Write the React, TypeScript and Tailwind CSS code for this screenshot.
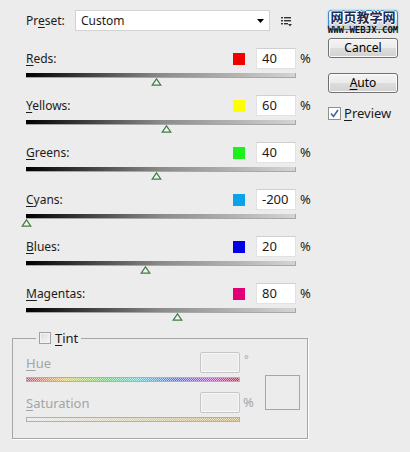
import React from "react";

const channels = [
  { name: "Reds", color: "#f00000", value: "40" },
  { name: "Yellows", color: "#ffff00", value: "60" },
  { name: "Greens", color: "#1ef01e", value: "40" },
  { name: "Cyans", color: "#0aa2e8", value: "-200" },
  { name: "Blues", color: "#0000e6", value: "20" },
  { name: "Magentas", color: "#e2007a", value: "80" },
];

// slider runs -200..300 over 270px
const thumbLeft = (v: string) => ((Number(v) + 200) / 500) * 270;

function Key({ text, at = 0 }: { text: string; at?: number }) {
  return (
    <>
      {text.slice(0, at)}
      <span className="underline underline-offset-2 decoration-1">{text[at]}</span>
      {text.slice(at + 1)}
    </>
  );
}

function Thumb({ left }: { left: number }) {
  return (
    <svg
      width="11"
      height="8"
      className="absolute top-[5px]"
      style={{ left: left - 5 }}
    >
      <path d="M5.5 0.8 L9.8 7.2 H1.2 Z" fill="#eef5ee" stroke="#3f7d42" strokeWidth="1.2" />
    </svg>
  );
}

function Button({ children }: { children: React.ReactNode }) {
  return (
    <div className="h-[20px] w-[70px] rounded-[3px] border border-[#707070] bg-[linear-gradient(#f4f4f4,#ebebeb_50%,#dddddd_50%,#d2d2d2)] flex items-center justify-center text-black shadow-[inset_0_0_0_1px_#fbfbfb]">
      {children}
    </div>
  );
}

function Checker() {
  return (
    <div className="absolute inset-0 bg-[repeating-conic-gradient(#ffffff99_0_25%,transparent_0_50%)] bg-[length:2px_2px]" />
  );
}

export default function App() {
  return (
    <div
      className="w-[410px] h-[452px] bg-[#ececec] flex text-[12px] text-[#1b1b1b] leading-none"
      style={{ fontFamily: '"Noto Sans", "Open Sans", sans-serif' }}
    >
      {/* left column */}
      <div className="w-[300px] ml-[12px] pt-[10px]">
        <div className="ml-[14px] flex items-center h-[21px]">
          <span className="w-[49px]">
            <Key text="Preset:" at={2} />
          </span>
          <div className="w-[195px] h-[21px] bg-white border border-[#d2d2d2] flex items-center pl-[5px] pr-[5px]">
            <span className="flex-1">Custom</span>
            <svg width="7" height="4">
              <path d="M0 0 H7 L3.5 4 Z" fill="#000" />
            </svg>
          </div>
          <svg width="12" height="11" className="ml-[11px] mt-[1px]">
            <rect x="0" y="1" width="2" height="1.4" fill="#333" />
            <rect x="3" y="1" width="7" height="1.4" fill="#333" />
            <rect x="0" y="4" width="2" height="1.4" fill="#333" />
            <rect x="3" y="4" width="7" height="1.4" fill="#333" />
            <rect x="0" y="7" width="2" height="1.4" fill="#333" />
            <rect x="3" y="7" width="4" height="1.4" fill="#333" />
            <path d="M7 8 H11 L9 10.5 Z" fill="#333" />
          </svg>
        </div>

        <div className="mt-[17px]">
          {channels.map((c) => (
            <div key={c.name} className="ml-[14px] h-[47px]">
              <div className="flex items-center h-[21px] w-[287px]">
                <span className="flex-1">
                  <Key text={c.name + ":"} />
                </span>
                <div className="w-[12px] h-[12px]" style={{ backgroundColor: c.color }} />
                <div className="ml-[11px] w-[40px] h-[21px] bg-white border border-[#e2e2e2] border-t-[#cfcfcf] flex items-center pl-[5px] text-[13px]">
                  {c.value}
                </div>
                <span className="ml-[4px] w-[13px] text-[13px]">%</span>
              </div>
              <div className="relative mt-[4px] w-[270px] h-[5px]">
                <div className="w-full h-full border-b border-r border-[#a8a8a8] bg-[linear-gradient(to_right,#000,#8a8a8a_50%,#d4d4d4)]" />
                <Thumb left={thumbLeft(c.value)} />
              </div>
            </div>
          ))}
        </div>

        {/* tint group */}
        <fieldset className="mt-[1px] w-[295px] h-[108px] border border-[#a6a6a6] shadow-[1px_1px_0_#fff] pl-[13px] pr-[7px]">
          <legend className="ml-[10px] px-[3px] flex items-center h-[14px]">
            <span className="w-[12px] h-[12px] border border-[#a0a0a0] bg-[linear-gradient(135deg,#dcdcdc,#f6f6f6)] shadow-[inset_0_0_0_1px_#f4f4f4]" />
            <span className="ml-[4px] text-[13px]">
              <Key text="Tint" />
            </span>
          </legend>
          <div className="flex mt-[7px] text-[#a4a4a4]">
            <div className="w-[230px]">
              <div className="flex items-center h-[21px]">
                <span className="flex-1 text-[13px] mt-[2px]">
                  <Key text="Hue" />
                </span>
                <div className="w-[40px] h-[21px] rounded-[2px] border border-[#c6c6c6] shadow-[inset_0_0_0_1px_#f7f7f7]" />
                <span className="ml-[4px] w-[12px] text-[11px] -mt-[8px]">°</span>
              </div>
              <div className="relative mt-[4px] w-[214px] h-[5px] border border-[#b0b0b0] bg-[linear-gradient(to_right,#e0407a,#f0d020_18%,#50e060_38%,#40e0e0_52%,#5070f0_70%,#d040e0_88%,#d02050)]">
                <Checker />
              </div>
              <div className="flex items-center h-[21px] mt-[10px]">
                <span className="flex-1 text-[13px] mt-[2px]">
                  <Key text="Saturation" />
                </span>
                <div className="w-[40px] h-[21px] rounded-[2px] border border-[#c6c6c6] shadow-[inset_0_0_0_1px_#f7f7f7]" />
                <span className="ml-[3px] w-[13px] text-[13px]">%</span>
              </div>
              <div className="relative mt-[4px] w-[214px] h-[5px] border border-[#b0b0b0] bg-[linear-gradient(to_right,#e6e6e6,#d9c98a_60%,#d8b050)]">
                <Checker />
              </div>
            </div>
            <div className="ml-[9px] mt-[23px] w-[35px] h-[35px] border border-[#a6a6a6]" />
          </div>
        </fieldset>
      </div>

      {/* right column */}
      <div className="ml-[16px] pt-[10px] flex flex-col">
        <div className="relative">
          <div className="h-[20px] w-[70px] rounded-[3px] border border-[#3c8fc8] bg-[linear-gradient(#f2f2f2,#ebebeb_50%,#dddddd_50%,#cfcfcf)] shadow-[0_0_2px_#6ac4f4]" />
          <div className="absolute left-0 top-0 w-[70px] flex flex-col items-center">
            <span
              className="text-[13px] font-bold text-[#1d2b55] leading-[14px] whitespace-nowrap"
              style={{
                fontFamily: '"Noto Sans CJK SC", sans-serif',
                textShadow: "1px 0 #fff, -1px 0 #fff, 0 1px #fff, 0 -1px #fff",
              }}
            >
              网页教学网
            </span>
            <span
              className="mt-[2px] text-[9px] font-bold text-[#111] leading-[8px] whitespace-nowrap"
              style={{ fontFamily: '"DejaVu Sans Mono", monospace' }}
            >
              WWW.WEBJX.COM
            </span>
          </div>
        </div>
        <div className="mt-[8px]">
          <Button>Cancel</Button>
        </div>
        <div className="mt-[15px]">
          <Button>
            <Key text="Auto" />
          </Button>
        </div>
        <div className="mt-[14px] flex items-center">
          <span className="w-[13px] h-[13px] border border-[#8e8f8f] bg-white flex items-center justify-center">
            <svg width="9" height="9">
              <path d="M1 4.5 L3.5 7.5 L8 1" fill="none" stroke="#4a5f97" strokeWidth="1.6" />
            </svg>
          </span>
          <span className="ml-[3px] text-[13px]">
            <Key text="Preview" />
          </span>
        </div>
      </div>
    </div>
  );
}
